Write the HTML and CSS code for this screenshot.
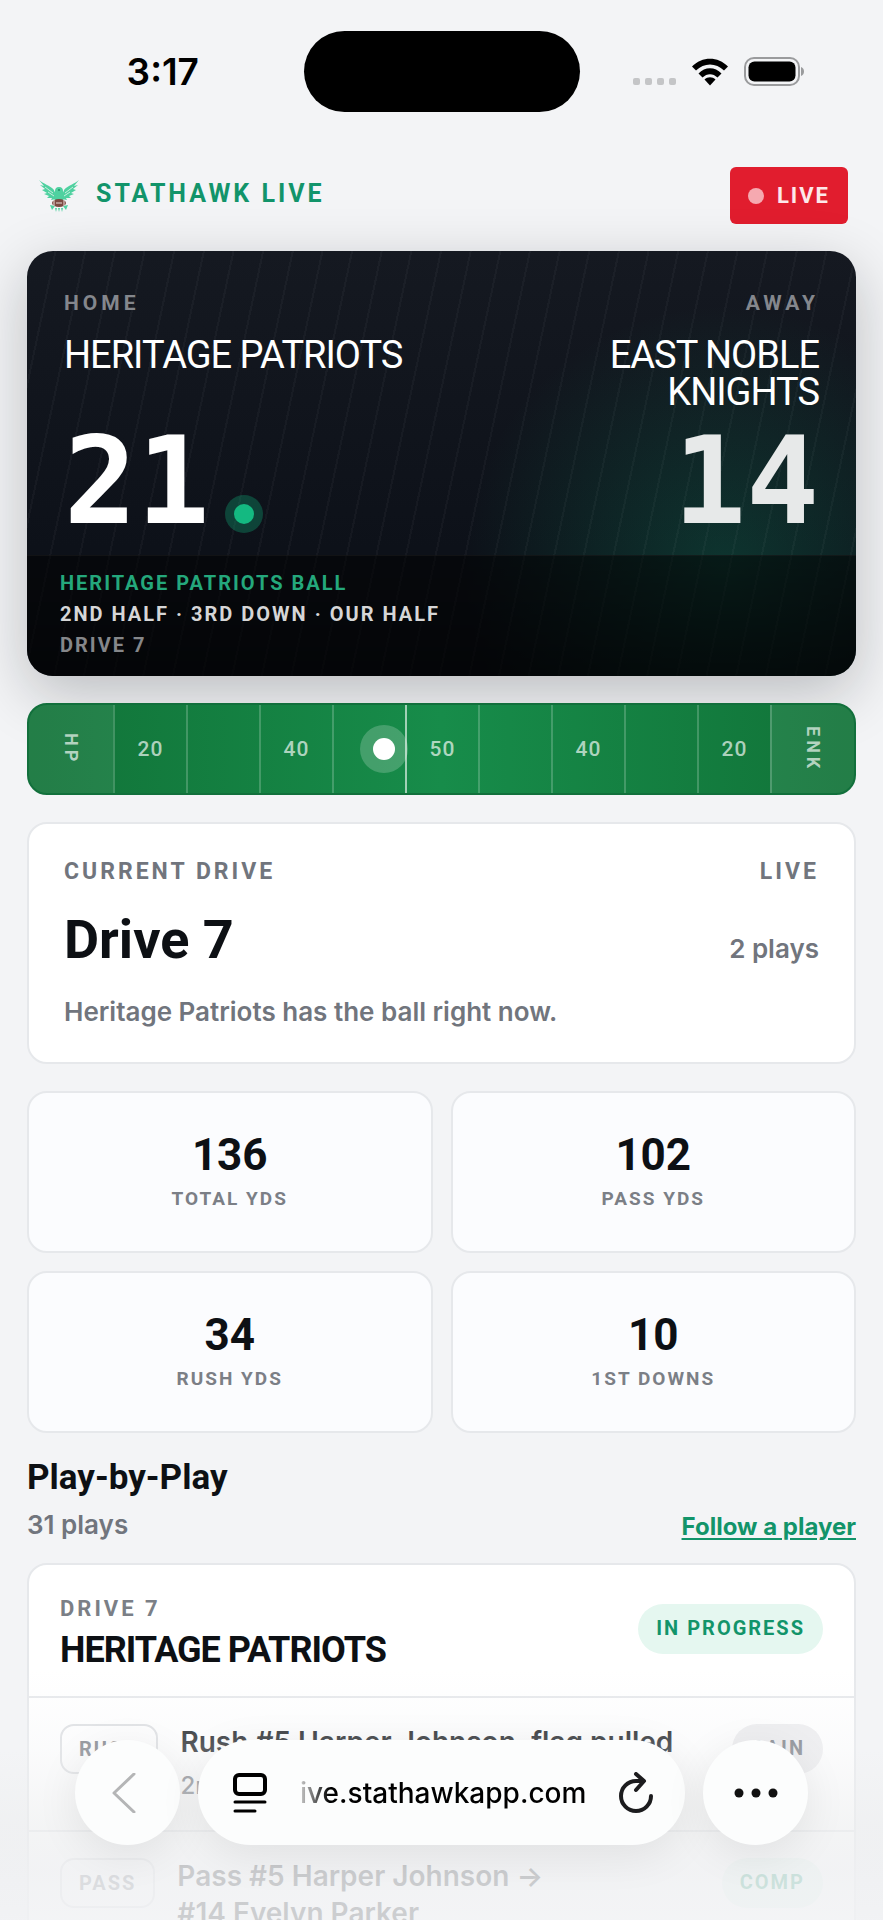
FILE: index.html
```html
<!DOCTYPE html>
<html lang="en">
  <head>
    <meta charset="UTF-8" />
    <meta name="viewport" content="width=device-width, initial-scale=1.0" />
    <title>StatHawk Live</title>
    <link rel="stylesheet" href="styles.css">
  </head>
  <body>
    <div class="screen">
      <div class="status-bar">
        <span class="clock">3:17</span>
        <span class="island"></span>
        <div class="status-icons">
          <span class="signal"><i></i><i></i><i></i><i></i></span>
          <svg class="wifi" viewBox="0 0 38 28" aria-hidden="true">
            <path d="M1 8.500C11 -2 27 -2 37 8.500L33 12.500C25 4.500 13 4.500 5 12.500Z" />
            <path d="M7.500 15.500C14 8.500 24 8.500 30.500 15.500L26.500 19.500C22 15 16 15 11.500 19.500Z" />
            <path d="M13.500 21.500C16.500 18.500 21.500 18.500 24.500 21.500L19 27.500Z" />
          </svg>
          <svg class="battery" viewBox="0 0 61 29" aria-hidden="true">
            <rect x="1" y="1" width="54" height="27" rx="9" fill="none" stroke="#9a9b9d" stroke-width="2" />
            <rect x="4.500" y="4.500" width="47" height="20" rx="6" fill="#000" />
            <path d="M57 10c4 1 4 8 0 9z" fill="#9a9b9d" />
          </svg>
        </div>
      </div>

      <header class="topbar">
        <div class="brand">
          <svg class="logo" viewBox="0 0 40 32" aria-hidden="true">
            <g fill="#4fd1a0">
              <path d="M0 0C4 4 11 5 15 10L17 19L12 20L13 18L8 18L10 16L5 14L8 13L3 10L6 9L1 5L5 6Z" />
              <path d="M40 0C36 4 29 5 25 10L23 19L28 20L27 18L32 18L30 16L35 14L32 13L37 10L34 9L39 5L35 6Z" />
              <path d="M20 7c3 0 4 2 4 4l3 5-3 4h-8l-3-4 3-5c0-2 1-4 4-4z" />
              <path d="M11 25l5 1-3 4zM29 25l-5 1 3 4zM16 28l2 0-1 4zM24 28l-2 0 1 4zM19 28h2l-1 4z" />
            </g>
            <path d="M6 7l8 6M9 12l6 4M34 7l-8 6M31 12l-6 4" stroke="#c9efe0" stroke-width="1" fill="none" />
            <circle cx="20" cy="10" r="1" fill="#1f8f66" />
            <ellipse cx="20" cy="23" rx="7" ry="4" fill="#7c4a42" />
            <path d="M17 23h6M15 20v6M25 20v6" stroke="#e8dcd8" stroke-width="1" />
          </svg>
          <span class="brand-name">STATHAWK LIVE</span>
        </div>
        <span class="live-badge"><i></i>LIVE</span>
      </header>

      <main class="content">
        <section class="scoreboard">
          <div class="teams">
            <div class="team">
              <span class="side">HOME</span>
              <h2 class="team-name">HERITAGE PATRIOTS</h2>
              <div class="score">21<i class="possession"></i></div>
            </div>
            <div class="team away">
              <span class="side">AWAY</span>
              <h2 class="team-name">EAST NOBLE KNIGHTS</h2>
              <div class="score">14</div>
            </div>
          </div>
          <div class="situation">
            <p class="ball">HERITAGE PATRIOTS BALL</p>
            <p class="down">2ND HALF · 3RD DOWN · OUR HALF</p>
            <p class="drive">DRIVE 7</p>
          </div>
        </section>

        <section class="field">
          <div class="endzone">HP</div>
          <div class="yard">20</div>
          <div class="yard"></div>
          <div class="yard">40</div>
          <div class="yard"><span class="ball-spot"></span></div>
          <div class="yard midfield">50</div>
          <div class="yard"></div>
          <div class="yard">40</div>
          <div class="yard"></div>
          <div class="yard">20</div>
          <div class="endzone last">ENK</div>
        </section>

        <section class="card current-drive">
          <div class="row labels">
            <span>CURRENT DRIVE</span>
            <span>LIVE</span>
          </div>
          <div class="row drive-row">
            <h2>Drive 7</h2>
            <span class="muted">2 plays</span>
          </div>
          <p class="muted">Heritage Patriots has the ball right now.</p>
        </section>

        <section class="stats">
          <div class="stat"><strong>136</strong><span>TOTAL YDS</span></div>
          <div class="stat"><strong>102</strong><span>PASS YDS</span></div>
          <div class="stat"><strong>34</strong><span>RUSH YDS</span></div>
          <div class="stat"><strong>10</strong><span>1ST DOWNS</span></div>
        </section>

        <section class="plays">
          <div class="plays-head">
            <div>
              <h3>Play-by-Play</h3>
              <p class="muted">31 plays</p>
            </div>
            <a href="#follow">Follow a player</a>
          </div>
          <div class="card play-list">
            <div class="drive-head">
              <div>
                <span class="drive-label">DRIVE 7</span>
                <h4>HERITAGE PATRIOTS</h4>
              </div>
              <span class="pill green">IN PROGRESS</span>
            </div>
            <article class="play">
              <span class="tag">RUSH</span>
              <div class="play-text">
                <p class="play-title">Rush #5 Harper Johnson, flag pulled</p>
                <p class="play-sub">2nd down · Our half</p>
              </div>
              <span class="pill grey">GAIN</span>
            </article>
            <article class="play">
              <span class="tag">PASS</span>
              <div class="play-text">
                <p class="play-title">Pass #5 Harper Johnson →<br>#14 Evelyn Parker</p>
              </div>
              <span class="pill green">COMP</span>
            </article>
          </div>
        </section>
      </main>

      <div class="fog"></div>
      <nav class="browser-bar">
        <button class="round back" type="button" aria-label="Back">
          <svg width="24" height="40" viewBox="0 0 24 40" fill="none" stroke="#b4b5b6" stroke-width="3" stroke-linecap="round" stroke-linejoin="round">
            <path d="M22 1L2 20l20 19" />
          </svg>
        </button>
        <div class="address">
          <button type="button" aria-label="Page menu">
            <svg width="36" height="42" viewBox="0 0 36 42" fill="none" stroke="#000" stroke-width="4" stroke-linecap="round">
              <rect x="3" y="3" width="30" height="19" rx="4" />
              <path d="M3 30h30M3 39h20" stroke-width="3" />
            </svg>
          </button>
          <input type="text" aria-label="Address" value="ive.stathawkapp.com" readonly>
          <button type="button" aria-label="Reload">
            <svg width="34" height="42" viewBox="0 0 34 42" fill="none" stroke="#1c1c1e" stroke-width="4" stroke-linecap="round" stroke-linejoin="round">
              <path d="M32 24A15 15 0 1 1 17 9h7" />
              <path d="M17 2l8 7-8 9" />
            </svg>
          </button>
        </div>
        <button class="round" type="button" aria-label="More">
          <svg width="44" height="10" viewBox="0 0 44 10" fill="#111">
            <circle cx="5" cy="5" r="4.500" /><circle cx="22" cy="5" r="4.500" /><circle cx="39" cy="5" r="4.500" />
          </svg>
        </button>
      </nav>
    </div>
  </body>
</html>
```

FILE: styles.css
```css
* {
  box-sizing: border-box;
}
body {
  margin: 0;
  background-color: #f3f4f6;
  color: #0d1014;
  font-family: Inter, sans-serif;
}
h2,
h3,
h4,
p {
  margin: 0;
}
button {
  border: none;
  background: none;
  padding: 0;
  cursor: pointer;
}
svg {
  display: block;
}
.screen {
  position: relative;
  height: 100vh;
  overflow: hidden;
}

/* status bar */
.status-bar {
  display: grid;
  grid-template-columns: 1fr 276px 1fr;
  align-items: center;
  padding-top: 31px;
}
.clock {
  justify-self: center;
  padding-left: 22px;
  font-size: 37px;
  line-height: 45px;
  font-weight: 600;
  color: #000;
}
.island {
  height: 81px;
  border-radius: 41px;
  background: #000;
}
.status-icons {
  display: flex;
  align-items: center;
  gap: 15px;
  padding-left: 53px;
}
.signal {
  display: flex;
  gap: 5px;
  padding-top: 20px;
}
.signal i {
  width: 7px;
  height: 7px;
  border-radius: 2px;
  background: #c4c5c7;
}
.wifi {
  width: 38px;
  height: 28px;
}
.battery {
  width: 61px;
  height: 29px;
}

/* header */
.topbar {
  display: flex;
  justify-content: space-between;
  align-items: center;
  padding: 55px 35px 0 39px;
}
.brand {
  display: flex;
  align-items: flex-start;
  gap: 17px;
}
.logo {
  width: 40px;
  height: 32px;
}
.brand-name {
  font-family: Roboto, sans-serif;
  font-size: 25px;
  line-height: 28px;
  font-weight: 700;
  letter-spacing: 3px;
  color: #12946a;
}
.live-badge {
  display: flex;
  align-items: center;
  gap: 13px;
  height: 57px;
  padding: 0 18px;
  border-radius: 6px;
  background: #e11d2e;
  color: #fde8ea;
  font-family: Roboto, sans-serif;
  font-size: 22px;
  font-weight: 700;
  letter-spacing: 2px;
}
.live-badge i {
  width: 16px;
  height: 16px;
  border-radius: 50%;
  background: #f6a9b0;
}

.content {
  display: flex;
  flex-direction: column;
  gap: 27px;
  padding: 27px;
}

/* scoreboard */
.scoreboard {
  border-radius: 26px;
  overflow: hidden;
  font-family: Roboto, sans-serif;
  background:
    repeating-linear-gradient(102deg, rgba(255, 255, 255, 0) 0 27px, rgba(255, 255, 255, 0.03) 27px 29px),
    radial-gradient(circle at 84% 74%, rgba(16, 185, 129, 0.21), rgba(16, 185, 129, 0) 260px),
    linear-gradient(#151921, #0d1119 70%);
  box-shadow: 0 18px 60px rgba(13, 16, 20, 0.24);
}
.teams {
  display: grid;
  grid-template-columns: 1fr 1fr;
  padding: 40px 37px 11px;
}
.team {
  display: flex;
  flex-direction: column;
}
.away {
  align-items: flex-end;
  text-align: right;
}
.side {
  font-size: 21px;
  line-height: 25px;
  font-weight: 700;
  letter-spacing: 4px;
  color: #84878d;
}
.team-name {
  margin: 21px 0 9px;
  font-size: 38px;
  line-height: 37px;
  font-weight: 400;
  letter-spacing: -1px;
  color: #fff;
}
.away .team-name {
  max-width: 220px;
}
.score {
  display: flex;
  align-items: flex-end;
  gap: 24px;
  margin-top: auto;
  font-family: "DejaVu Sans Mono", monospace;
  font-size: 121px;
  line-height: 124px;
  font-weight: 700;
  color: #fff;
}
.away .score {
  color: #e7e9e9;
}
.possession {
  width: 20px;
  height: 20px;
  margin-bottom: 20px;
  border-radius: 50%;
  background: #14b981;
  box-shadow: 0 0 0 9px rgba(16, 185, 129, 0.3);
}
.situation {
  padding: 12px 33px 15px;
  border-top: 1px solid rgba(255, 255, 255, 0.06);
  background: linear-gradient(rgba(0, 0, 0, 0.5), rgba(0, 0, 0, 0.7));
  font-size: 20px;
  line-height: 31px;
  font-weight: 700;
  letter-spacing: 2px;
}
.ball {
  color: #24a87c;
}
.down {
  color: #d6d6d7;
}
.drive {
  color: #85878a;
}

/* field strip */
.field {
  display: flex;
  height: 92px;
  border: 2px solid #12703c;
  border-radius: 20px;
  overflow: hidden;
  background: linear-gradient(90deg, #117338, #178c4a 50%, #117338);
  color: rgba(255, 255, 255, 0.66);
  font-family: Roboto, sans-serif;
  font-size: 21px;
  line-height: 24px;
  font-weight: 500;
  letter-spacing: 1px;
}
.endzone {
  display: flex;
  align-items: center;
  justify-content: center;
  flex: 0 0 84px;
  background: rgba(255, 255, 255, 0.08);
  writing-mode: vertical-rl;
  font-size: 18px;
  font-weight: 700;
  letter-spacing: 4px;
}
.endzone.last,
.yard {
  border-left: 2px solid rgba(255, 255, 255, 0.2);
}
.yard {
  display: flex;
  align-items: center;
  justify-content: center;
  flex: 1;
}
.yard.midfield {
  border-left-color: rgba(255, 255, 255, 0.6);
}
.ball-spot {
  width: 22px;
  height: 22px;
  margin-left: 28px;
  border-radius: 50%;
  background: #fff;
  box-shadow: 0 0 0 13px rgba(255, 255, 255, 0.2);
}

/* cards */
.card {
  border: 2px solid #e6e8eb;
  border-radius: 20px;
  background: #fff;
}
.row {
  display: flex;
  justify-content: space-between;
}
.muted {
  font-size: 26px;
  line-height: 32px;
  font-weight: 600;
  color: #71757d;
}
.current-drive {
  padding: 34px 35px 34px;
}
.labels {
  font-family: Roboto, sans-serif;
  font-size: 23px;
  line-height: 28px;
  font-weight: 700;
  letter-spacing: 3px;
  color: #71757d;
}
.drive-row {
  align-items: baseline;
  margin: 24px 0 26px;
}
.drive-row h2 {
  font-family: Roboto, sans-serif;
  font-size: 54px;
  line-height: 60px;
  font-weight: 700;
}

/* stats */
.stats {
  display: grid;
  grid-template-columns: 1fr 1fr;
  gap: 18px;
}
.stat {
  display: flex;
  flex-direction: column;
  align-items: center;
  gap: 6px;
  padding: 36px 20px 41px;
  border: 2px solid #e6e8eb;
  border-radius: 20px;
  background: #fbfcfe;
  font-family: Roboto, sans-serif;
}
.stat strong {
  font-size: 44px;
  line-height: 52px;
}
.stat span {
  font-size: 19px;
  line-height: 23px;
  font-weight: 700;
  letter-spacing: 2px;
  color: #7b7f86;
}

/* play by play */
.plays-head {
  display: flex;
  justify-content: space-between;
  align-items: flex-end;
  margin-bottom: 22px;
}
.plays-head h3 {
  margin-bottom: 14px;
  font-family: Roboto, sans-serif;
  font-size: 35px;
  line-height: 35px;
  font-weight: 700;
}
.plays-head a {
  font-size: 24px;
  line-height: 28px;
  font-weight: 700;
  color: #12946a;
  text-underline-offset: 3px;
}
.drive-head {
  display: flex;
  justify-content: space-between;
  align-items: center;
  padding: 30px 31px 25px;
}
.drive-label {
  font-family: Roboto, sans-serif;
  font-size: 22px;
  line-height: 28px;
  font-weight: 700;
  letter-spacing: 3px;
  color: #7b7f86;
}
.drive-head h4 {
  margin-top: 6px;
  font-family: Roboto, sans-serif;
  font-size: 36px;
  line-height: 42px;
  font-weight: 700;
  letter-spacing: -1px;
}
.drive-head .pill {
  margin-bottom: 8px;
}
.pill,
.tag {
  height: 50px;
  padding: 0 18px;
  border-radius: 25px;
  font-family: Roboto, sans-serif;
  font-size: 20px;
  line-height: 48px;
  font-weight: 700;
  letter-spacing: 2px;
}
.green {
  background: #e5f7f0;
  color: #12946a;
}
.grey {
  background: #ececee;
  color: #71757d;
}
.tag {
  padding: 0 17px;
  border: 2px solid #dcdee1;
  border-radius: 14px;
  line-height: 46px;
  color: #71757d;
}
.play {
  display: flex;
  gap: 22px;
  align-items: flex-start;
  min-height: 134px;
  padding: 26px 31px;
  border-top: 2px solid #e6e8eb;
}
.play-text {
  flex: 1;
}
.play-title {
  font-size: 28px;
  line-height: 37px;
  font-weight: 600;
}
.play-sub {
  margin-top: 9px;
  font-size: 24px;
  line-height: 32px;
  font-weight: 500;
  color: #71757d;
}

/* browser controls over the page */
.fog {
  position: absolute;
  left: 0;
  right: 0;
  bottom: 0;
  height: 250px;
  background: linear-gradient(rgba(243, 244, 246, 0), rgba(243, 244, 246, 0.34) 32%, rgba(238, 239, 240, 0.66) 62%, rgba(239, 240, 242, 0.84) 80%, rgba(241, 242, 244, 0.84));
}
.browser-bar {
  position: absolute;
  left: 75px;
  right: 75px;
  bottom: 75px;
  display: flex;
  gap: 18px;
}
.round,
.address {
  height: 105px;
  border-radius: 53px;
  background: #fcfdfd;
  box-shadow: 0 10px 44px rgba(0, 0, 0, 0.08);
}
.round {
  display: flex;
  flex: 0 0 105px;
  align-items: center;
  justify-content: center;
}
.back {
  padding-right: 8px;
}
.address {
  display: flex;
  flex: 1;
  align-items: center;
  padding: 0 32px 0 34px;
  min-width: 0;
}
.address input {
  flex: 1;
  min-width: 0;
  margin: 0 24px 0 32px;
  padding: 0;
  border: none;
  background: none;
  color: #000;
  font-family: Inter, sans-serif;
  font-size: 28px;
  font-weight: 500;
  -webkit-mask-image: linear-gradient(90deg, rgba(0, 0, 0, 0.2), #000 30px);
  mask-image: linear-gradient(90deg, rgba(0, 0, 0, 0.2), #000 30px);
}
```
